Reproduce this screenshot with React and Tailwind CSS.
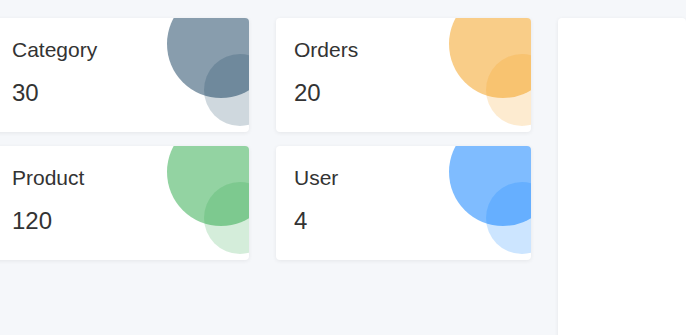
import React from "react";

const cards = [
  { title: "Category", value: "30", big: "bg-[#113b5b]/50", small: "bg-[#113b5b]/20" },
  { title: "Orders", value: "20", big: "bg-[#f39c12]/50", small: "bg-[#f39c12]/20" },
  { title: "Product", value: "120", big: "bg-[#28a745]/50", small: "bg-[#28a745]/20" },
  { title: "User", value: "4", big: "bg-[#007bff]/50", small: "bg-[#007bff]/20" },
];

function Card({ title, value, big, small }) {
  return (
    <div className="relative h-[114px] overflow-hidden rounded-[4px] bg-white pl-[18px] pt-[20px] shadow-[0_1px_4px_rgba(0,0,0,0.07)]">
      <div className={`absolute right-[-26px] top-[-28px] h-[108px] w-[108px] rounded-full ${big}`} />
      <div className={`absolute right-[-27px] top-[36px] h-[72px] w-[72px] rounded-full ${small}`} />
      <div className="relative text-[21px] leading-[24px] text-[#333]">{title}</div>
      <div className="relative mt-[17px] text-[24px] leading-[28px] text-[#333]">{value}</div>
    </div>
  );
}

export default function App() {
  return (
    <div
      className="flex h-[335px] w-[686px] overflow-hidden bg-[#f5f7fa] pt-[18px]"
      style={{ fontFamily: '"Liberation Sans", Arial, sans-serif' }}
    >
      <div className="ml-[-6px] grid shrink-0 grid-cols-[255px_255px] content-start gap-x-[27px] gap-y-[14px]">
        {cards.map((c) => (
          <Card key={c.title} {...c} />
        ))}
      </div>
      <div className="ml-[27px] h-[400px] flex-1 shrink-0 rounded-[4px] bg-white shadow-[0_1px_4px_rgba(0,0,0,0.07)]" />
    </div>
  );
}
